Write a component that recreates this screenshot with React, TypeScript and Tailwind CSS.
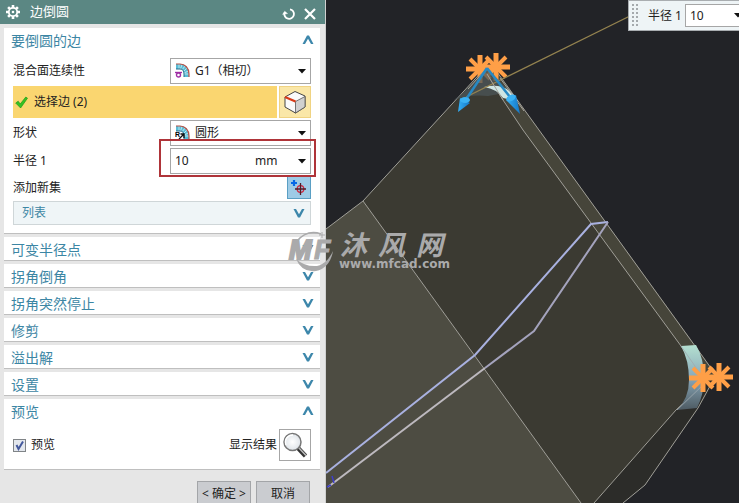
import React, { useState } from "react";

const Chevron = ({ up = false }: { up?: boolean }) => (
  <svg width="12" height="10" viewBox="0 0 12 10" className={up ? "" : "rotate-180"}>
    <path d="M.5 9 5 .5h2L11.500 9H9L6 3.800 3 9z" fill="#3d87ab" />
  </svg>
);

const Caret = () => (
  <svg width="8" height="5" viewBox="0 0 8 5">
    <path d="M0 0h8L4 4.500z" fill="#111" />
  </svg>
);

const GearIcon = () => (
  <svg width="14" height="14" viewBox="0 0 14 14">
    <g stroke="#fff" strokeWidth="2.600">
      <path d="M7 0v14M0 7h14M2.100 2.100l9.800 9.800M11.900 2.100l-9.800 9.800" />
    </g>
    <circle cx="7" cy="7" r="4.200" fill="#5b8783" stroke="#fff" strokeWidth="1.800" />
    <circle cx="7" cy="7" r="1.300" fill="#fff" />
  </svg>
);

const ResetIcon = () => (
  <svg width="14" height="14" viewBox="0 0 14 14" fill="none" stroke="#fff">
    <path d="M8 2.300a4.800 4.800 0 1 1-5.500 3.500" strokeWidth="1.800" />
    <path d="M.6 7.400 2.700 4.200 5.600 6.600z" fill="#fff" strokeWidth=".4" />
  </svg>
);

const CloseIcon = () => (
  <svg width="12" height="12" viewBox="0 0 12 12">
    <path d="m1 1 10 10M11 1 1 11" stroke="#fff" strokeWidth="2.200" />
  </svg>
);

const CheckIcon = () => (
  <svg width="13" height="13" viewBox="0 0 13 13">
    <path d="M.7 7 3.200 5.200 5.200 8 10.800 1l1.700 1.200L5.600 12z" fill="#35c322" stroke="#239919" strokeWidth=".7" />
  </svg>
);

const BlendIcon = () => (
  <>
    <path d="M1 1h4c5 0 9 4 9 10v3h-5v-3c0-3-1-5-4-5H1z" fill="#58bdd7" />
    <path d="M4 1v5M7 1.500 5.500 6M10 3 7 7M12 5 8.500 8.500M13.500 8 9 10M14 11H9" stroke="#d3f1f5" strokeWidth=".8" />
    <path d="M1 1h4c5 0 9 4 9 10v3" fill="none" stroke="#b55449" strokeWidth="1.200" />
    <path d="M1 6h4c3 0 4 2 4 5v3" fill="none" stroke="#276b89" />
  </>
);

const ContinuityIcon = () => (
  <svg width="16" height="16" viewBox="0 0 16 16">
    <BlendIcon />
    <path d="M0 9.500h7" stroke="#a02fa5" strokeWidth="1.400" />
    <circle cx="3.500" cy="12" r="2" fill="#fff" stroke="#a02fa5" strokeWidth="1.400" />
  </svg>
);

const ShapeIcon = () => (
  <svg width="16" height="16" viewBox="0 0 16 16">
    <BlendIcon />
    <path d="m4 14 5-5M5.500 9H9v4" fill="none" stroke="#111" strokeWidth="1.300" />
    <text x="0" y="12" fontSize="7" fontWeight="bold" fontFamily="Liberation Sans, sans-serif">R</text>
  </svg>
);

const CubeIcon = () => (
  <svg width="24" height="24" viewBox="0 0 24 24">
    <path d="M2 7 12 1.500 22 6v11l-9.500 6L2 17z" fill="#fafafa" stroke="#454545" strokeLinejoin="round" />
    <path d="m12.500 11.500 9.500-5V17l-9.500 6z" fill="#d0d0d0" stroke="#555" strokeWidth=".8" />
    <path d="m2 7 10.500 4.500" stroke="#d83a18" strokeWidth="2.400" />
  </svg>
);

const AddSetIcon = () => (
  <svg width="18" height="18" viewBox="0 0 18 18" fill="none" className="shrink-0">
    <path d="M4 1v6M1 4h6" stroke="#0668e6" strokeWidth="2.200" />
    <circle cx="10.500" cy="10" r="3.300" stroke="#d02840" strokeWidth="1.300" />
    <path d="M10.500 4v12M5 10h11" stroke="#501a26" strokeWidth="1.300" />
  </svg>
);

const MagnifierIcon = () => (
  <svg width="26" height="26" viewBox="0 0 26 26">
    <defs>
      <radialGradient id="lens">
        <stop offset="0" stopColor="#fff" />
        <stop offset="1" stopColor="#dfe4e9" />
      </radialGradient>
    </defs>
    <path d="m16 16 7.500 8" stroke="#333" strokeWidth="4.500" />
    <path d="m16.500 15.500 7.500 8" stroke="#bbb" strokeWidth="1.600" />
    <circle cx="10.500" cy="10" r="8.500" fill="url(#lens)" stroke="#777" strokeWidth="1.500" />
    <path d="M4 13c-2-6 2-10 7-10" fill="none" stroke="#fff" strokeWidth="1.400" />
  </svg>
);

const Section = ({
  title,
  children,
}: {
  title: string;
  children?: React.ReactNode;
}) => (
  <section className="bg-white border-b border-[#bfbfbf]">
    <button className="flex items-center justify-between w-full h-[23px] pl-[7px] pr-[6px] text-sm text-[#3c86a4]">
      <span className="pt-[2px]">{title}</span>
      <Chevron up={!!children} />
    </button>
    {children && <div className="flex flex-col gap-[2px] px-[9px] pt-[7px] pb-2">{children}</div>}
  </section>
);

const SelectRow = ({
  id,
  label,
  value,
  icon,
}: {
  id: string;
  label: string;
  value: string;
  icon: React.ReactNode;
}) => (
  <div className="flex items-center justify-between">
    <label htmlFor={id}>{label}</label>
    <div className="relative w-[141px]">
      <select
        id={id}
        className="block appearance-none w-full h-[26px] pl-6 border border-[#a6a6a6] bg-white"
      >
        <option>{value}</option>
      </select>
      <span className="absolute left-[5px] top-[5px] pointer-events-none">{icon}</span>
      <span className="absolute right-[5px] inset-y-0 flex items-center pointer-events-none">
        <Caret />
      </span>
    </div>
  </div>
);

const Dialog = () => {
  const [radius, setRadius] = useState("10");
  const [preview, setPreview] = useState(true);

  return (
    <aside className="w-[326px] shrink-0 bg-[#e6e6e6] border-r border-[#cfd0d0] text-xs text-[#222]">
      <header className="flex items-center h-6 pl-[6px] pr-[9px] bg-[#5b8783] text-white">
        <GearIcon />
        <h1 className="flex-1 ml-[10px] text-[13px]">边倒圆</h1>
        <button aria-label="重置" className="mr-2 pt-[3px]">
          <ResetIcon />
        </button>
        <button aria-label="关闭" className="pt-[3px]">
          <CloseIcon />
        </button>
      </header>

      <div className="flex flex-col gap-[3px] pt-1 pl-1 pr-[5px]">
        <Section title="要倒圆的边">
          <SelectRow id="continuity" label="混合面连续性" value="G1（相切）" icon={<ContinuityIcon />} />
          <div className="flex gap-[2px] h-8">
            <div className="flex items-center flex-1 gap-[6px] pl-[2px] bg-[#fad670]">
              <CheckIcon />
              <span>选择边 (2)</span>
            </div>
            <button
              aria-label="选择边"
              className="flex items-center justify-center w-8 bg-[#fae7a8] border border-[#f0d382]"
            >
              <CubeIcon />
            </button>
          </div>
          <SelectRow id="shape" label="形状" value="圆形" icon={<ShapeIcon />} />
          <div className="flex items-center justify-between">
            <label htmlFor="radius">半径 1</label>
            <div className="relative flex items-center w-[141px] h-[26px] pl-1 border border-[#a6a6a6] bg-white">
              <input
                id="radius"
                value={radius}
                onChange={(e) => setRadius(e.target.value)}
                className="w-20 bg-transparent focus:outline-none"
              />
              <span>mm</span>
              <button aria-label="单位" className="ml-auto h-full px-1">
                <Caret />
              </button>
              <div className="absolute z-10 -top-[10px] -bottom-1 -left-3 -right-[6px] border-2 border-[#af3439] pointer-events-none" />
            </div>
          </div>
          <div className="flex items-center justify-between h-[23px]">
            <span>添加新集</span>
            <button
              aria-label="添加新集"
              className="flex items-center justify-center w-6 h-[23px] bg-[#9ecbe6] border border-[#5a9fc4]"
            >
              <AddSetIcon />
            </button>
          </div>
          <button className="flex items-center justify-between h-6 pl-2 pr-[5px] bg-[#eff5f7] border border-[#cfd6d8] text-[#3c86a4]">
            <span>列表</span>
            <Chevron />
          </button>
        </Section>
        <Section title="可变半径点" />
        <Section title="拐角倒角" />
        <Section title="拐角突然停止" />
        <Section title="修剪" />
        <Section title="溢出解" />
        <Section title="设置" />
        <Section title="预览">
          <div className="flex items-center h-8">
            <label className="relative flex items-center gap-[5px]">
              <input
                type="checkbox"
                checked={preview}
                onChange={(e) => setPreview(e.target.checked)}
                className="appearance-none w-[13px] h-[13px] border border-[#808487] bg-[#e3e7ed]"
              />
              {preview && (
                <svg width="13" height="13" viewBox="0 0 13 13" className="absolute left-0 pointer-events-none">
                  <path d="m3.500 6 2 4L10 2.500" fill="none" stroke="#43589c" strokeWidth="2" />
                </svg>
              )}
              预览
            </label>
            <span className="ml-auto mr-[2px]">显示结果</span>
            <button
              aria-label="显示结果"
              className="flex items-center justify-center w-8 h-8 border border-[#a6a6a6]"
            >
              <MagnifierIcon />
            </button>
          </div>
        </Section>
      </div>

      <footer className="flex justify-end gap-[5px] mt-[11px] pr-[15px]">
        <button className="w-[54px] h-[25px] bg-[#caccd0] border border-[#a3a5a8] whitespace-nowrap">
          &lt; 确定 &gt;
        </button>
        <button className="w-[54px] h-[25px] bg-[#caccd0] border border-[#a3a5a8]">取消</button>
      </footer>
    </aside>
  );
};

const Star = ({ x, y }: { x: number; y: number }) => (
  <g transform={`translate(${x} ${y})`} stroke="#ff9f47">
    <path d="M0-14v28M-14 0h28" strokeWidth="5" />
    <path d="m-10-10 20 20M10-10l-20 20" strokeWidth="4" />
  </g>
);

const Model = () => (
  <svg
    className="block w-full h-full"
    viewBox="326 0 413 503"
    preserveAspectRatio="xMinYMin slice"
    fill="none"
  >
    <defs>
      <linearGradient id="blend" x1="0" y1="0" x2="0" y2="1">
        <stop offset="0" stopColor="#b4e0d0" />
        <stop offset=".5" stopColor="#8aa9ba" />
        <stop offset="1" stopColor="#4d5a62" />
      </linearGradient>
      <linearGradient id="arrow" x1="0" y1="0" x2="1" y2="0">
        <stop offset="0" stopColor="#35b0f5" />
        <stop offset="1" stopColor="#1478c8" />
      </linearGradient>
    </defs>
    <path d="M363 201 486 67 594 225 681 346 706 380 676 410 594 503H581z" fill="#3b3a32" />
    <path d="M326 229 363 201 581 503H326z" fill="#4d4c42" />
    <path d="M486 74 492 65 718 377 706 384 681 346 523 130z" fill="#46453a" />
    <path d="M706 382 717 378 698 408 645 485 623 503H594L676 410z" fill="#2c2c29" />

    <g stroke="#a09f98">
      <path d="M326 229 363 201 486 67M363 201 581 503" />
      <path d="M492 65 716 375 698 408 645 485 623 503" />
      <path d="m487 74 16 26 20 30 158 216 25 34M594 503l82-93 30-29" />
    </g>

    <path d="M681 346 696 345Q704 358 704 378 704 394 697 408L677 410Q689 398 689 380 689 360 681 346z" fill="url(#blend)" />
    <path d="m681 346 25 36-29 28" stroke="#a0aab0" strokeWidth=".8" />

    <path d="M326 473 475 355 591 224 608 222" stroke="#a9b1e0" strokeWidth="2" />
    <path d="M608 222 534 331 485 368" stroke="#a4a3bd" strokeWidth="2" />
    <path d="M485 368 328 487" stroke="#bdb9bf" strokeWidth="2" />
    <path d="m332 476 2 7M327 487l4-2" stroke="#3d3fca" strokeWidth="1.500" />

    <Star x={480} y={69} />
    <Star x={496} y={67} />
    <Star x={703} y={378} />
    <Star x={719} y={377} />

    <path d="M487 68 475 80 464 92 454 100Q470 94 488 96L510 92z" fill="#4c5558" opacity=".75" />
    <path d="M484 87Q500 83 511 92L518 101 503 98Q497 89 484 87z" fill="#cfe6e4" />
    <path d="M466 97 640 11" stroke="#94834f" strokeWidth="1.300" />
    <path d="m487 74 16 26M487 68 468 89M500 78l24 33" stroke="#a6a39b" />
    <path d="M487 68 467 98M487 68l23 29" stroke="#2789c4" strokeWidth="2.500" />
    <path d="m460 98 10 5-12 9z" fill="url(#arrow)" />
    <ellipse cx="465" cy="100" rx="5" ry="3" fill="#3bb2f4" />
    <path d="m506 100 10-5 4 19z" fill="url(#arrow)" />
    <ellipse cx="511" cy="98" rx="5" ry="3" fill="#3bb2f4" transform="rotate(-25 511 98)" />
  </svg>
);

const RadiusBar = () => (
  <div className="absolute top-0 right-0 flex items-center w-[111px] h-[31px] pl-[3px] bg-[#eef4f6] border border-r-0 border-[#a9adb0] overflow-hidden text-xs text-[#222]">
    <svg width="6" height="24" viewBox="0 0 6 24" className="shrink-0">
      <path d="M1 0v24M5 0v24" stroke="#a5aaad" strokeWidth="2" strokeDasharray="2 2" />
    </svg>
    <label htmlFor="radius-bar" className="shrink-0 w-[37px] ml-[10px] whitespace-nowrap">
      半径 1
    </label>
    <div className="relative shrink-0 w-[64px] h-[23px] border border-[#a6a6a6] bg-white">
      <input
        id="radius-bar"
        defaultValue="10"
        className="block w-10 h-full pl-1 bg-transparent focus:outline-none"
      />
      <span className="absolute inset-y-0 left-12 flex items-center">
        <Caret />
      </span>
    </div>
  </div>
);

const Watermark = () => (
  <svg
    width="170"
    height="50"
    viewBox="0 0 170 50"
    className="absolute left-[285px] top-[225px] pointer-events-none"
    fill="#aaaaab"
  >
    <path d="M11 17Q22 4 36 9" fill="none" stroke="#aaaaab" strokeWidth="1.500" />
    <path d="M37 7v6M34 10h6" stroke="#aaaaab" />
    <path d="M11 34Q17 48 31 46 45 43 48 26 42 39 32 41 20 42 11 34z" />
    <text x="4" y="34" fontSize="27" fontWeight="bold" fontStyle="italic" stroke="#aaaaab" strokeWidth="2" fontFamily="Liberation Sans, sans-serif">
      M
    </text>
    <text x="29" y="34" fontSize="27" fontWeight="bold" fontStyle="italic" stroke="#aaaaab" fontFamily="Liberation Sans, sans-serif">
      F
    </text>
    <g fontFamily="Noto Sans CJK SC, sans-serif" fontSize="27" fontWeight="bold" fontStyle="italic">
      <text x="55" y="30">沐</text>
      <text x="93" y="30">风</text>
      <text x="131" y="30">网</text>
    </g>
    <text x="54" y="43" fontSize="12" fontWeight="bold" fontFamily="DejaVu Sans, sans-serif">
      www.mfcad.com
    </text>
  </svg>
);

export default function App() {
  return (
    <div className="relative flex h-screen overflow-hidden bg-[#222327] font-['Noto_Sans','Noto_Sans_CJK_SC',sans-serif]">
      <Dialog />
      <main className="relative flex-1 min-w-0">
        <Model />
        <RadiusBar />
      </main>
      <Watermark />
    </div>
  );
}
